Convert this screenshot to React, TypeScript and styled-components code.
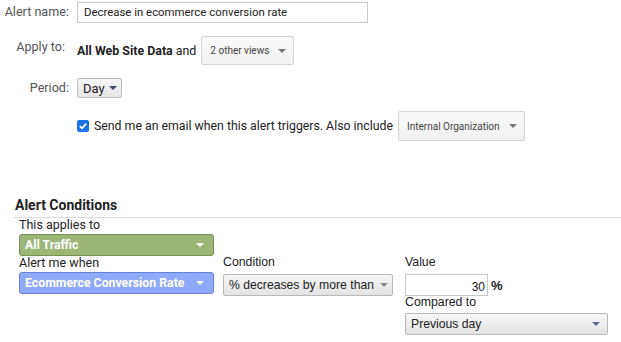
import React from 'react';
import styled, { createGlobalStyle } from 'styled-components';

const GlobalStyle = createGlobalStyle`
    body {
        margin: 0;
        background: #fff;
        font-family: Roboto, "Liberation Sans", Arial, sans-serif;
        color: #222;
    }
`;

const Page = styled.div`
    width: 621px;
    height: 342px;
    overflow: hidden;
`;

const SettingsGrid = styled.div`
    display: grid;
    grid-template-columns: 69px 1fr;
    column-gap: 8px;
    row-gap: 13px;
    padding-top: 2px;
    align-items: start;
`;

const FieldLabel = styled.div<{ $offset?: number }>`
    text-align: right;
    font-size: 12.6px;
    color: #555;
    line-height: 20px;
    white-space: nowrap;
    padding-right: ${p => p.$offset ?? 0}px;
    padding-top: ${p => (p.$offset ? 1 : 0)}px;
`;

const FieldValue = styled.div`
    display: flex;
    align-items: center;
    font-size: 12.4px;
    min-height: 20px;
    white-space: nowrap;
`;

const TextInput = styled.div`
    box-sizing: border-box;
    width: 291px;
    height: 21px;
    border: 1px solid #c8c8c8;
    font-size: 11.4px;
    line-height: 19px;
    padding-left: 6px;
    color: #222;
`;

const Strong = styled.b`
    font-weight: 700;
    margin-right: 3px;
`;

const GreyDropdown = styled.div<{ $h: number }>`
    box-sizing: border-box;
    display: flex;
    align-items: center;
    height: ${p => p.$h}px;
    padding: 0 7px 0 8px;
    margin-left: 5px;
    border: 1px solid #d4d4d4;
    border-radius: 2px;
    background: linear-gradient(#fafafa, #f1f1f1);
    font-size: 10px;
    color: #444;
`;

const Caret = styled.span<{ $color?: string; $gap?: number }>`
    display: inline-block;
    flex: none;
    width: 0;
    height: 0;
    border-left: 4px solid transparent;
    border-right: 4px solid transparent;
    border-top: 4px solid ${p => p.$color ?? '#777'};
    margin-left: ${p => p.$gap ?? 12}px;
`;

const SmallButton = styled.div`
    box-sizing: border-box;
    display: flex;
    align-items: center;
    height: 20px;
    padding: 0 4px 0 5px;
    border: 1px solid #bdbdbd;
    border-radius: 2px;
    background: linear-gradient(#f6f6f6, #e6e6e6);
    font-size: 13px;
    color: #222;
`;

const CheckRow = styled.div`
    display: flex;
    align-items: center;
    font-size: 12.3px;
    color: #222;
    white-space: nowrap;
`;

const Check = styled.span`
    box-sizing: border-box;
    width: 12px;
    height: 12px;
    border-radius: 2px;
    background: #1a73e8;
    display: inline-flex;
    align-items: center;
    justify-content: center;
    margin-right: 5px;
`;

const Conditions = styled.section`
    margin-top: 56px;
    padding-left: 14px;
`;

const SectionTitle = styled.h3`
    margin: 0;
    padding: 0 0 3px 1px;
    font-size: 14px;
    font-weight: 700;
    line-height: 17px;
    color: #222;
    border-bottom: 1px solid #dcdcdc;
`;

const CondGrid = styled.div`
    display: grid;
    grid-template-columns: 204px 182px 216px;
    padding-left: 5px;
    font-family: "Liberation Sans", Arial, sans-serif;
    font-size: 12px;
`;

const Column = styled.div`
    display: flex;
    flex-direction: column;
    align-items: flex-start;
`;

const Spacer = styled.div`
    height: 38px;
`;

const CondLabel = styled.div<{ $roboto?: boolean }>`
    font-family: ${p => (p.$roboto ? 'Roboto, sans-serif' : '"Liberation Sans", Arial, sans-serif')};
    font-size: ${p => (p.$roboto ? 12.5 : 12.3)}px;
    line-height: 13px;
    height: 13px;
    color: #222;
    white-space: nowrap;
`;

const ColorSelect = styled.div<{ $bg: string; $border: string }>`
    box-sizing: border-box;
    display: flex;
    align-items: center;
    justify-content: space-between;
    width: 195px;
    height: 22px;
    margin-top: 3px;
    padding: 0 9px 0 5px;
    background: ${p => p.$bg};
    border: 1px solid ${p => p.$border};
    border-radius: 3px;
    color: #fff;
    font-family: Roboto, "Liberation Sans", Arial, sans-serif;
    font-weight: 700;
    font-size: 12.3px;
    white-space: nowrap;
`;

const Select = styled.div<{ $w: number; $top: number }>`
    box-sizing: border-box;
    display: flex;
    align-items: center;
    justify-content: space-between;
    width: ${p => p.$w}px;
    height: 22px;
    margin-top: ${p => p.$top}px;
    padding: 0 7px 0 5px;
    border: 1px solid #b8b8b8;
    border-radius: 2px;
    background: linear-gradient(#f7f7f7, #e3e3e3);
    font-size: 12.2px;
    color: #222;
    white-space: nowrap;
`;

const ValueRow = styled.div`
    display: flex;
    align-items: center;
    margin-top: 5px;
    height: 22px;
`;

const NumberBox = styled.div`
    box-sizing: border-box;
    width: 83px;
    height: 22px;
    border: 1px solid #c8c8c8;
    text-align: right;
    padding-right: 2px;
    line-height: 24px;
    font-size: 12px;
`;

const Percent = styled.span`
    margin-left: 3px;
    font-weight: 700;
    font-size: 13px;
`;

export default function App() {
    return (
        <Page>
            <GlobalStyle />
            <SettingsGrid>
                <FieldLabel>Alert name:</FieldLabel>
                <FieldValue>
                    <TextInput>Decrease in ecommerce conversion rate</TextInput>
                </FieldValue>

                <FieldLabel $offset={4}>Apply to:</FieldLabel>
                <FieldValue>
                    <Strong>All Web Site Data</Strong> and
                    <GreyDropdown $h={29}>
                        2 other views <Caret $gap={9} />
                    </GreyDropdown>
                </FieldValue>

                <FieldLabel>Period:</FieldLabel>
                <FieldValue>
                    <SmallButton>
                        Day <Caret $color="#3b4a6b" $gap={4} />
                    </SmallButton>
                </FieldValue>

                <div />
                <CheckRow>
                    <Check>
                        <svg width="10" height="10" viewBox="0 0 10 10">
                            <path d="M1.8 5.2 L4 7.3 L8.3 2.6" stroke="#fff" strokeWidth="1.8" fill="none" />
                        </svg>
                    </Check>
                    Send me an email when this alert triggers. Also include
                    <GreyDropdown $h={30}>
                        Internal Organization <Caret $gap={9} />
                    </GreyDropdown>
                </CheckRow>
            </SettingsGrid>

            <Conditions>
                <SectionTitle>Alert Conditions</SectionTitle>
                <CondGrid>
                    <Column>
                        <CondLabel $roboto>This applies to</CondLabel>
                        <ColorSelect $bg="#9db677" $border="#76904f">
                            All Traffic <Caret $color="#fff" />
                        </ColorSelect>
                        <CondLabel $roboto>Alert me when</CondLabel>
                        <ColorSelect $bg="#8eaaf8" $border="#6482d6">
                            Ecommerce Conversion Rate <Caret $color="#fff" />
                        </ColorSelect>
                    </Column>
                    <Column>
                        <Spacer />
                        <CondLabel>Condition</CondLabel>
                        <Select $w={170} $top={5}>
                            % decreases by more than <Caret $color="#888" $gap={6} />
                        </Select>
                    </Column>
                    <Column>
                        <Spacer />
                        <CondLabel>Value</CondLabel>
                        <ValueRow>
                            <NumberBox>30</NumberBox>
                            <Percent>%</Percent>
                        </ValueRow>
                        <CondLabel>Compared to</CondLabel>
                        <Select $w={203} $top={4}>
                            Previous day <Caret $color="#5a6a8a" />
                        </Select>
                    </Column>
                </CondGrid>
            </Conditions>
        </Page>
    );
}
